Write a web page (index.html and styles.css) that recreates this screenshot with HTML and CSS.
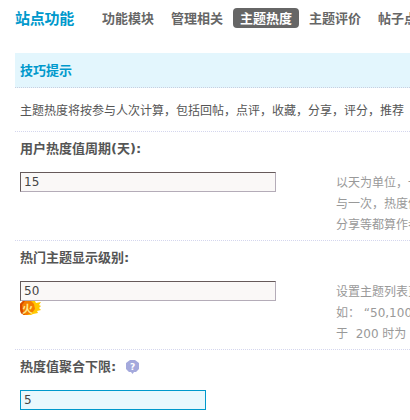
FILE: index.html
```html
<!DOCTYPE html>
<html lang="zh">
<head>
<meta charset="utf-8">
<title>站点功能</title>
<link rel="stylesheet" href="styles.css">
</head>
<body>
<header class="header">
  <h1 class="title">站点功能</h1>
  <nav class="nav">
    <a class="nav-item">功能模块</a>
    <a class="nav-item">管理相关</a>
    <a class="nav-item active">主题热度</a>
    <a class="nav-item">主题评价</a>
    <a class="nav-item">帖子点评</a>
  </nav>
</header>
<main class="main">
  <div class="tip-title">技巧提示</div>
  <div class="tip-text">主题热度将按参与人次计算，包括回帖，点评，收藏，分享，评分，推荐</div>

  <section class="setting">
    <div class="label">用户热度值周期(天):</div>
    <div class="row">
      <div class="field"><input class="input" type="text" value="15"></div>
      <div class="desc">以天为单位，一天内<br>与一次，热度值加<br>分享等都算作参与</div>
    </div>
  </section>

  <section class="setting">
    <div class="label">热门主题显示级别:</div>
    <div class="row">
      <div class="field">
        <input class="input" type="text" value="50">
        <svg class="fire" width="21" height="14" viewBox="0 0 21 14">
          <path d="M4 0H15L16 2L21 1L19 4L21 5L19 7L21 9L17 10L18 12L13 13L11 14H4L1 12L0 8L0 3Z" fill="#ffc800"/>
          <path d="M3 0H11L14 3L15 8L12 12L7 14H4L1 12L0 8L0 3Z" fill="#f47c00"/>
          <path d="M3 0H5L2 4L3 11L5 14H4L1 12L0 8L0 3Z" fill="#d84a00"/>
          <text x="7.5" y="11.5" class="fire-text">火</text>
        </svg>
      </div>
      <div class="desc">设置主题列表页<br>如： “50,100,200”<br>于&nbsp;&nbsp;200&nbsp;时为</div>
    </div>
  </section>

  <section class="setting last">
    <div class="label">
      热度值聚合下限:
      <svg class="help" width="13" height="14" viewBox="0 0 13 14">
        <path d="M4 0H9L13 3V9L10 12H8L6.5 14L5 12H3L0 9V3Z" fill="#a4a9dc"/>
        <text x="6.5" y="10" class="help-text">?</text>
      </svg>
    </div>
    <div class="row">
      <div class="field"><input class="input focus" type="text" value="5"></div>
    </div>
  </section>
</main>
</body>
</html>
```

FILE: styles.css
```css
* { box-sizing: border-box; }
html, body { margin: 0; padding: 0; overflow: hidden; width: 410px; height: 420px; background: #fff; }
body { font-family: "Noto Sans CJK SC", "DejaVu Sans", sans-serif; font-size: 12px; color: #555; }

.header { display: flex; align-items: center; padding: 8px 0 0 15px; height: 28px; white-space: nowrap; }
.title { margin: 0 21px 0 0; width: 59px; font-size: 15px; line-height: 20px; font-weight: 700; color: #0099cc; white-space: nowrap; letter-spacing: -0.25px; }
.nav { display: flex; gap: 3px; }
.nav-item { display: block; flex: none; width: 66px; height: 20px; line-height: 20px; text-align: center; font-size: 13px; font-weight: 700; color: #666; border-radius: 4px; }
.nav-item.active { background: #666; color: #fff; }

.main { margin-left: 15px; margin-top: 25px; }
.tip-title { height: 35px; line-height: 34px; padding-left: 5px; font-size: 13px; font-weight: 700; color: #0099cc;
  background-color: #e3f6fd;
  border-bottom: 1px dotted #c9cfe0; }
.tip-text { height: 44px; line-height: 43px; padding-left: 5px; white-space: nowrap; color: #555; border-bottom: 1px dotted #d4d6ee; }

.setting { height: 109px; border-bottom: 1px dotted #d4d6ee; padding-left: 5px; }
.setting.last { height: auto; border-bottom: 0; }
.label { height: 34px; line-height: 34px; font-family: "DejaVu Sans", "Noto Sans CJK SC", sans-serif; font-size: 13px; font-weight: 700; color: #555; white-space: nowrap; display: flex; align-items: center; }
.row { display: grid; grid-template-columns: 256px 1fr; column-gap: 60px; margin-top: 6px; }
.field { height: 20px; }
.input { display: block; width: 256px; height: 20px; margin: 0; padding: 0 3px; font-family: "DejaVu Sans", sans-serif; font-size: 12px; color: #444; outline: 0;
  border: 1px solid #b4acb8; border-top-color: #665a5a; border-left-color: #665a5a;
  background-color: #faf8f7; }
.input.focus { width: 186px; border-color: #0099cc; background-color: #e8f8fd; }
.fire { display: block; }
.fire-text { font-family: "Noto Sans CJK SC", sans-serif; font-size: 11px; font-weight: 700; fill: #ffe98a; text-anchor: middle; }
.help { margin-left: 10px; flex: none; }
.help-text { font-family: "DejaVu Sans", sans-serif; font-size: 9px; font-weight: 700; fill: #fff; text-anchor: middle; }
.desc { width: 200px; line-height: 21px; font-family: "DejaVu Sans", "Noto Sans CJK SC", sans-serif; font-size: 12px; color: #999; white-space: nowrap; margin-top: 1px; }
```
